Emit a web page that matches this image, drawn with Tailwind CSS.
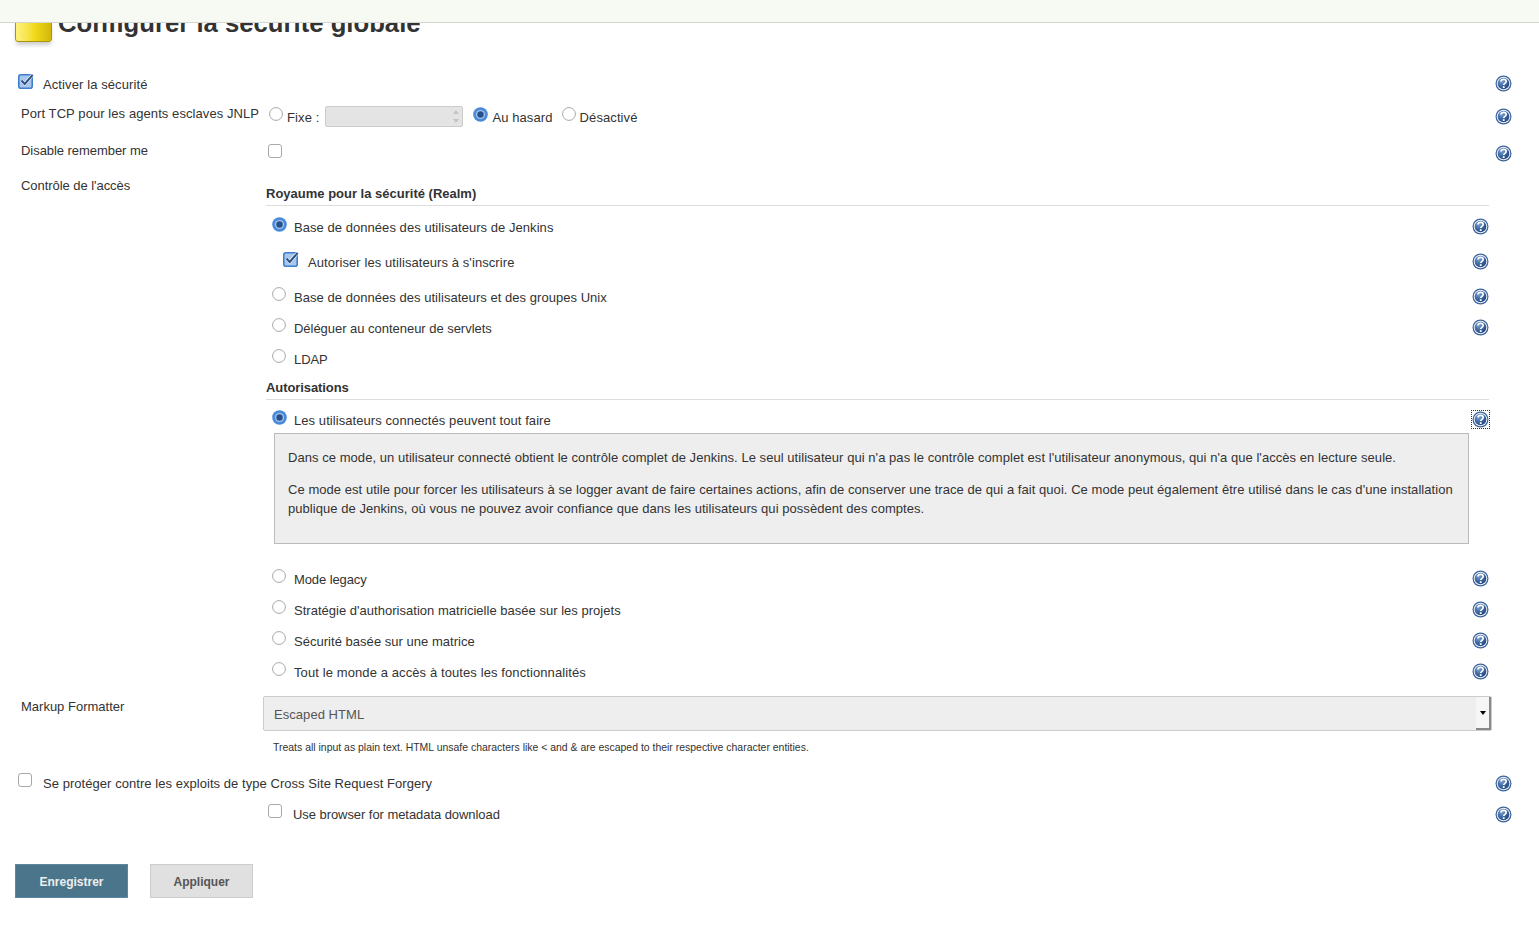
<!DOCTYPE html>
<html lang="fr">
<head>
  <meta charset="UTF-8" />
  <title>Configurer la sécurité globale</title>
  <script src="https://cdn.jsdelivr.net/npm/@tailwindcss/browser@4"></script>
</head>
<body class="bg-white text-[#333] text-[13px] leading-[16px] font-['Liberation_Sans',Arial,sans-serif] overflow-hidden">
  <svg class="absolute w-0 h-0">
    <defs>
      <radialGradient id="helpFill" cx="35%" cy="30%" r="80%">
        <stop offset="0" stop-color="#7fa3d0" /><stop offset="0.5" stop-color="#3f6aa3" /><stop offset="1" stop-color="#1f3f78" />
      </radialGradient>
    </defs>
    <symbol id="help" viewBox="0 0 17 17">
      <circle cx="8.5" cy="8.5" r="8" fill="#3c639c" />
      <circle cx="8.5" cy="8.5" r="6.8" fill="#eef3f9" />
      <circle cx="8.5" cy="8.5" r="5.8" fill="url(#helpFill)" />
      <path d="M5.9 6.5c.2-1.5 1.3-2.2 2.7-2.2 1.5 0 2.6.9 2.6 2.2 0 1.9-2.5 1.8-2.5 3.6" fill="none" stroke="#fff" stroke-width="1.7" />
      <rect x="7.8" y="11.2" width="1.8" height="1.8" fill="#fff" />
    </symbol>
    <symbol id="radio-on" viewBox="0 0 15 15">
      <circle cx="7.5" cy="7.5" r="7.3" fill="#4a8ad8" />
      <circle cx="7.5" cy="7.5" r="4.6" fill="#a4c4ec" />
      <circle cx="7.5" cy="7.5" r="3.2" fill="#27508a" />
    </symbol>
    <symbol id="radio-off" viewBox="0 0 14 14">
      <circle cx="7" cy="7" r="6.4" fill="#fff" stroke="#a8a8a8" stroke-width="1" />
    </symbol>
    <symbol id="check-on" viewBox="0 0 16 16">
      <rect x="0.8" y="1.8" width="13.4" height="13.4" rx="2" fill="#a9c6ec" stroke="#3f80cc" stroke-width="1.6" />
      <path d="M3.5 7.5l3.2 3.4L14.7 1.8" fill="none" stroke="#f4f8fd" stroke-width="3.2" />
      <path d="M3.5 7.5l3.2 3.4L14.7 1.8" fill="none" stroke="#2d4f80" stroke-width="2" />
    </symbol>
    <symbol id="check-off" viewBox="0 0 14 14">
      <rect x="0.5" y="0.5" width="13" height="13" rx="2.5" fill="#fff" stroke="#a8a8a8" />
    </symbol>
  </svg>

  <header class="absolute top-0 left-0 right-0 z-10 h-[23px] bg-[#f7f9f3] border-b border-[#d3d7cf]"></header>

  <main class="w-[1539px]">
    <div class="h-[72px] flex items-start pl-[15px]">
      <div class="w-[37px] h-[22px] mt-[20px] rounded-b-[3px] border border-[#a89410] bg-gradient-to-r from-[#fff27a] via-[#f2dc1c] to-[#d4b80a] shadow-[0_4px_4px_-1px_#ccc]"></div>
      <h1 class="ml-[6px] mt-[8px] text-[25.7px] leading-[30px] font-bold whitespace-nowrap">Configurer la sécurité globale</h1>
    </div>

    <div class="h-[32px] flex items-start">
      <svg class="ml-[18px] mt-[1px] w-4 h-4"><use href="#check-on" /></svg>
      <span class="ml-[9px] mt-[5px] tracking-[0.1px]">Activer la sécurité</span>
      <svg class="ml-auto mr-[27px] mt-[3px] w-[17px] h-[17px]"><use href="#help" /></svg>
    </div>

    <div class="h-[36px] flex items-start">
      <label class="w-[269px] pl-[21px] mt-[2px] tracking-[0.08px] whitespace-nowrap">Port TCP pour les agents esclaves JNLP</label>
      <svg class="mt-[3px] w-[14px] h-[14px]"><use href="#radio-off" /></svg>
      <span class="ml-[4px] mt-[6px] tracking-[0.1px]">Fixe :</span>
      <div class="relative ml-[6px] mt-[2px] w-[138px] h-[21px] rounded-[2px] border border-[#ccc] bg-[#e4e4e4]">
        <span class="absolute right-[3px] top-[3px] border-x-[3px] border-b-[4px] border-x-transparent border-b-[#c4c4c4]"></span>
        <span class="absolute right-[3px] bottom-[3px] border-x-[3px] border-t-[4px] border-x-transparent border-t-[#c4c4c4]"></span>
      </div>
      <svg class="ml-[10px] mt-[3px] w-[15px] h-[15px]"><use href="#radio-on" /></svg>
      <span class="ml-[4px] mt-[6px] tracking-[0.1px]">Au hasard</span>
      <svg class="ml-[9px] mt-[3px] w-[14px] h-[14px]"><use href="#radio-off" /></svg>
      <span class="ml-[4px] mt-[6px] tracking-[0.1px]">Désactivé</span>
      <svg class="ml-auto mr-[27px] mt-[4px] w-[17px] h-[17px]"><use href="#help" /></svg>
    </div>

    <div class="h-[36px] flex items-start">
      <label class="w-[268px] pl-[21px] mt-[3px] tracking-[-0.05px]">Disable remember me</label>
      <svg class="mt-[4px] w-[14px] h-[14px]"><use href="#check-off" /></svg>
      <svg class="ml-auto mr-[27px] mt-[5px] w-[17px] h-[17px]"><use href="#help" /></svg>
    </div>

    <div class="h-[510px] flex items-start">
      <label class="w-[266px] pl-[21px] mt-[2px] tracking-[-0.05px]">Contrôle de l'accès</label>
      <div class="w-[1223px]">
        <div class="h-[30px] pt-[10px] font-bold border-b border-[#ddd]">Royaume pour la sécurité (Realm)</div>
        <div class="h-[38px] flex items-start pl-[6px]">
          <svg class="mt-[11px] w-[15px] h-[15px]"><use href="#radio-on" /></svg>
          <span class="ml-[7px] mt-[14px] tracking-[0.05px]">Base de données des utilisateurs de Jenkins</span>
          <svg class="ml-auto mt-[12px] w-[17px] h-[17px]"><use href="#help" /></svg>
        </div>
        <div class="h-[35px] flex items-start pl-[17px]">
          <svg class="mt-[7px] w-4 h-4"><use href="#check-on" /></svg>
          <span class="ml-[9px] mt-[11px] tracking-[0.08px]">Autoriser les utilisateurs à s'inscrire</span>
          <svg class="ml-auto mt-[9px] w-[17px] h-[17px]"><use href="#help" /></svg>
        </div>
        <div class="h-[31px] flex items-start pl-[6px]">
          <svg class="mt-[8px] w-[14px] h-[14px]"><use href="#radio-off" /></svg>
          <span class="ml-[8px] mt-[11px] tracking-[0.04px]">Base de données des utilisateurs et des groupes Unix</span>
          <svg class="ml-auto mt-[9px] w-[17px] h-[17px]"><use href="#help" /></svg>
        </div>
        <div class="h-[31px] flex items-start pl-[6px]">
          <svg class="mt-[8px] w-[14px] h-[14px]"><use href="#radio-off" /></svg>
          <span class="ml-[8px] mt-[11px] tracking-[-0.03px]">Déléguer au conteneur de servlets</span>
          <svg class="ml-auto mt-[9px] w-[17px] h-[17px]"><use href="#help" /></svg>
        </div>
        <div class="h-[31px] flex items-start pl-[6px]">
          <svg class="mt-[8px] w-[14px] h-[14px]"><use href="#radio-off" /></svg>
          <span class="ml-[8px] mt-[11px] tracking-[-0.1px]">LDAP</span>
        </div>
        <div class="h-[28px] pt-[8px] font-bold border-b border-[#ddd] tracking-[-0.08px]">Autorisations</div>
        <div class="h-[33px] flex items-start pl-[6px]">
          <svg class="mt-[10px] w-[15px] h-[15px]"><use href="#radio-on" /></svg>
          <span class="ml-[7px] mt-[13px] tracking-[0.07px]">Les utilisateurs connectés peuvent tout faire</span>
          <svg class="ml-auto mt-[11px] w-[17px] h-[17px] outline-1 outline-dotted outline-[#1a2f66]"><use href="#help" /></svg>
        </div>
        <div class="ml-[8px] w-[1195px] h-[111px] mb-[16px] border border-[#bbb] bg-[#eee] px-[13px] pt-[14px] leading-[19px] tracking-[0.05px]">
          <p>Dans ce mode, un utilisateur connecté obtient le contrôle complet de Jenkins. Le seul utilisateur qui n'a pas le contrôle complet est l'utilisateur anonymous, qui n'a que l'accès en lecture seule.</p>
          <p class="mt-[13px]">Ce mode est utile pour forcer les utilisateurs à se logger avant de faire certaines actions, afin de conserver une trace de qui a fait quoi. Ce mode peut également être utilisé dans le cas d'une installation publique de Jenkins, où vous ne pouvez avoir confiance que dans les utilisateurs qui possèdent des comptes.</p>
        </div>
        <div class="h-[31px] flex items-start pl-[6px]">
          <svg class="mt-[9px] w-[14px] h-[14px]"><use href="#radio-off" /></svg>
          <span class="ml-[8px] mt-[12px] tracking-[-0.1px]">Mode legacy</span>
          <svg class="ml-auto mt-[10px] w-[17px] h-[17px]"><use href="#help" /></svg>
        </div>
        <div class="h-[31px] flex items-start pl-[6px]">
          <svg class="mt-[9px] w-[14px] h-[14px]"><use href="#radio-off" /></svg>
          <span class="ml-[8px] mt-[12px] tracking-[0.02px]">Stratégie d'authorisation matricielle basée sur les projets</span>
          <svg class="ml-auto mt-[10px] w-[17px] h-[17px]"><use href="#help" /></svg>
        </div>
        <div class="h-[31px] flex items-start pl-[6px]">
          <svg class="mt-[9px] w-[14px] h-[14px]"><use href="#radio-off" /></svg>
          <span class="ml-[8px] mt-[12px] tracking-[0.03px]">Sécurité basée sur une matrice</span>
          <svg class="ml-auto mt-[10px] w-[17px] h-[17px]"><use href="#help" /></svg>
        </div>
        <div class="h-[31px] flex items-start pl-[6px]">
          <svg class="mt-[9px] w-[14px] h-[14px]"><use href="#radio-off" /></svg>
          <span class="ml-[8px] mt-[12px] tracking-[0.1px]">Tout le monde a accès à toutes les fonctionnalités</span>
          <svg class="ml-auto mt-[10px] w-[17px] h-[17px]"><use href="#help" /></svg>
        </div>
      </div>
    </div>

    <div class="h-[53px] flex items-start">
      <label class="w-[263px] pl-[21px] mt-[13px]">Markup Formatter</label>
      <div class="mt-[10px] w-[1229px] h-[35px] flex rounded-[2px] border border-[#ccc] bg-[#eee] text-[#555]">
        <span class="ml-[10px] mt-[10px] tracking-[0.05px]">Escaped HTML</span>
        <div class="ml-auto w-[15px] flex items-center justify-center bg-[#f6f6f6] border-r-2 border-b-2 border-[#888]">
          <span class="border-x-[3px] border-t-[4px] border-x-transparent border-t-black"></span>
        </div>
      </div>
    </div>
    <div class="h-[31px] pl-[273px] pt-[1px] text-[10.46px] leading-[16px]">Treats all input as plain text. HTML unsafe characters like &lt; and &amp; are escaped to their respective character entities.</div>

    <div class="h-[31px] flex items-start">
      <svg class="ml-[18px] mt-[3px] w-[14px] h-[14px]"><use href="#check-off" /></svg>
      <span class="ml-[11px] mt-[6px] tracking-[0.05px]">Se protéger contre les exploits de type Cross Site Request Forgery</span>
      <svg class="ml-auto mr-[27px] mt-[5px] w-[17px] h-[17px]"><use href="#help" /></svg>
    </div>
    <div class="h-[63px] flex items-start">
      <svg class="ml-[268px] mt-[3px] w-[14px] h-[14px]"><use href="#check-off" /></svg>
      <span class="ml-[11px] mt-[6px] tracking-[-0.06px]">Use browser for metadata download</span>
      <svg class="ml-auto mr-[27px] mt-[5px] w-[17px] h-[17px]"><use href="#help" /></svg>
    </div>

    <div class="flex pl-[15px] gap-[22px] font-bold text-[12px]">
      <button class="w-[113px] h-[34px] pt-[1px] bg-[#4b758b] border border-[#5a8aa3] text-[#eee]">Enregistrer</button>
      <button class="w-[103px] h-[34px] pt-[1px] bg-[#e0e0e0] border border-[#ccc] text-[#555]">Appliquer</button>
    </div>
  </main>
</body>
</html>
